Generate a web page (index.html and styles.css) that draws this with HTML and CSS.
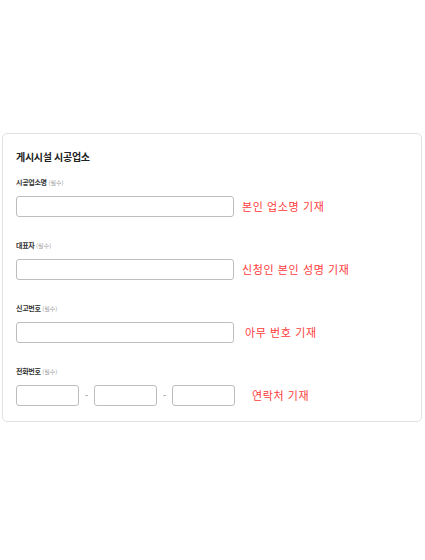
FILE: index.html
```html
<!DOCTYPE html>
<html lang="ko">
<head>
<meta charset="utf-8">
<link rel="stylesheet" href="styles.css">
</head>
<body>
<div class="card">
  <div class="title">게시시설 시공업소</div>
  <div class="field">
    <div class="label">시공업소명 <span class="note">(필수)</span></div>
    <div class="row">
      <input class="input wide" type="text">
      <span class="hint h1">본인 업소명 기재</span>
    </div>
  </div>
  <div class="field">
    <div class="label">대표자 <span class="note">(필수)</span></div>
    <div class="row">
      <input class="input wide" type="text">
      <span class="hint h1">신청인 본인 성명 기재</span>
    </div>
  </div>
  <div class="field">
    <div class="label">신고번호 <span class="note">(필수)</span></div>
    <div class="row">
      <input class="input wide" type="text">
      <span class="hint h3">아무 번호 기재</span>
    </div>
  </div>
  <div class="field last">
    <div class="label">전화번호 <span class="note">(필수)</span></div>
    <div class="row">
      <input class="input short" type="text">
      <span class="dash">-</span>
      <input class="input short" type="text">
      <span class="dash">-</span>
      <input class="input short" type="text">
      <span class="hint h4">연락처 기재</span>
    </div>
  </div>
</div>
</body>
</html>
```
FILE: styles.css
```css
html, body {
  margin: 0;
  padding: 0;
  background: #ffffff;
}
body {
  font-family: "Noto Sans CJK KR", "Noto Sans", sans-serif;
  color: #222;
}
.card {
  box-sizing: border-box;
  margin: 133px 0 0 2px;
  width: 420px;
  height: 289px;
  border: 1px solid #e2e2e2;
  border-radius: 5px;
  padding: 16px 0 0 13px;
}
.title {
  font-size: 10px;
  line-height: 14px;
  font-weight: 700;
  color: #222;
  letter-spacing: -0.3px;
  margin-bottom: 13px;
}
.field {
  margin-bottom: 23px;
}
.field.last {
  margin-bottom: 0;
}
.label {
  font-size: 7px;
  line-height: 10px;
  font-weight: 700;
  color: #333;
  letter-spacing: -0.3px;
  margin-bottom: 8px;
}
.note {
  font-size: 6px;
  font-weight: 400;
  color: #999;
  letter-spacing: 0;
}
.row {
  display: flex;
  align-items: center;
  height: 21px;
}
.input {
  box-sizing: border-box;
  height: 21px;
  border: 1.5px solid #bdbdbd;
  border-radius: 3px;
  background: #fff;
  padding: 0;
  margin: 0;
  outline: none;
}
.input.wide {
  width: 218px;
}
.input.short {
  width: 63px;
}
.dash {
  width: 15px;
  text-align: center;
  font-size: 9px;
  color: #777;
}
.hint {
  font-size: 11px;
  color: #ff3b3b;
  line-height: 21px;
  letter-spacing: 0.6px;
}
.h1 { margin-left: 8px; }
.h3 { margin-left: 11px; }
.h4 { margin-left: 17px; }
```
